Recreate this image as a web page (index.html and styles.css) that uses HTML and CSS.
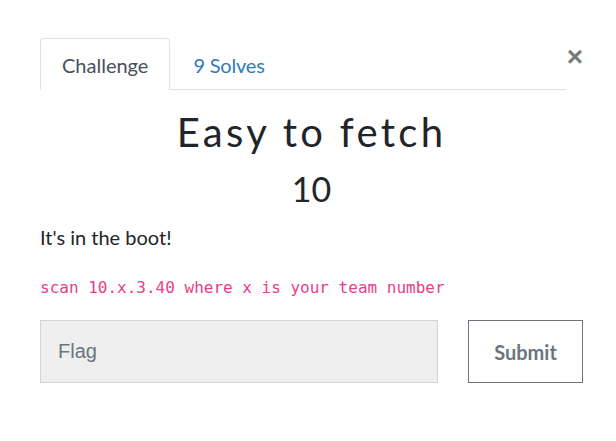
FILE: index.html
```html
<!DOCTYPE html>
<html>
<head>
<meta charset="utf-8">
<link rel="stylesheet" href="styles.css">
</head>
<body>
<div class="modal">
  <button class="close" aria-label="Close">×</button>
  <div class="content">
    <ul class="tabs">
      <li class="tab active">Challenge</li>
      <li class="tab link">9 Solves</li>
    </ul>
    <h1 class="title">Easy to fetch</h1>
    <h2 class="value">10</h2>
    <p class="desc">It's in the boot!</p>
    <p class="code-line"><code>scan 10.x.3.40 where x is your team number</code></p>
  </div>
  <div class="submit-row">
    <input class="flag" type="text" placeholder="Flag">
    <button class="submit">Submit</button>
  </div>
</div>
</body>
</html>
```
FILE: styles.css
```css
* { box-sizing: border-box; }
html, body { margin: 0; padding: 0; background: #fff; }
body { font-family: Lato, "Noto Sans", sans-serif; color: #212529; }
.modal { position: relative; width: 616px; height: 441px; padding: 38px 0 0 40px; }
.close {
  position: absolute; top: 43px; right: 33px;
  border: 0; background: none; padding: 0;
  font-family: "Liberation Sans", Arial, sans-serif;
  font-size: 28px; font-weight: 700; line-height: 1; color: #7a7a7a;
}
.content { width: 543px; }
.tabs {
  list-style: none; margin: 0; padding: 0; display: flex; width: 526px;
  border-bottom: 1px solid #dee2e6; height: 52px;
}
.tab {
  font-size: 20px; line-height: 1; padding: 16px 21px 0 21px;
  border: 1px solid transparent; border-radius: 4px 4px 0 0;
  margin-bottom: -1px;
}
.tab.active { color: #495057; border-color: #dee2e6 #dee2e6 #fff; background: #fff; }
.tab.link { color: #337ab7; padding-left: 22px; letter-spacing: -0.2px; }
.title {
  margin: 18px 0 0; text-align: center; font-weight: 400;
  font-size: 40px; line-height: 48px; letter-spacing: 3.3px; color: #212529;
}
.value {
  margin: 13px 0 0; text-align: center; font-weight: 400;
  font-size: 34px; line-height: 40px; color: #212529;
}
.desc { margin: 13px 0 0; font-size: 20px; line-height: 30px; }
.code-line { margin: 23px 0 0; line-height: 24px; }
code {
  font-family: "DejaVu Sans Mono", monospace; font-size: 16px; color: #e83e8c;
}
.submit-row { display: flex; gap: 30px; margin-top: 20px; }
.flag {
  width: 398px; height: 63px; background: #efefef; border: 1px solid #ced4da;
  padding: 0 17px; font-family: "Liberation Sans", Arial, sans-serif; font-size: 20px;
  color: #495057; border-radius: 0; outline: none;
}
.flag::placeholder { color: #6c757d; }
.submit {
  width: 115px; height: 63px; background: #fff; border: 1px solid #6c757d;
  color: #6c757d; font-family: Lato, sans-serif; font-weight: 700; font-size: 20px;
  border-radius: 0; padding: 0;
}
```
